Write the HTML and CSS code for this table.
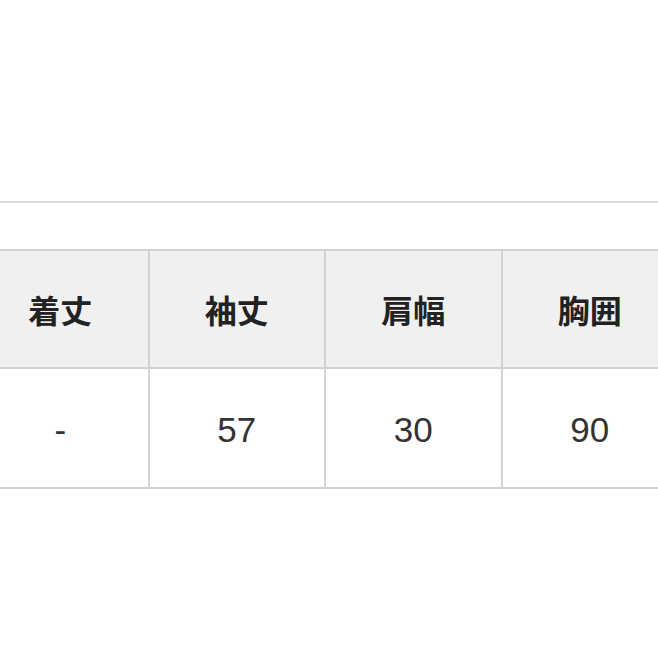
FILE: index.html
```html
<!DOCTYPE html>
<html lang="ja">
<head>
<meta charset="utf-8">
<link rel="stylesheet" href="styles.css">
</head>
<body>
<div class="page">
  <div class="rule"></div>
  <table class="size-table">
    <tr class="head">
      <th>着丈</th>
      <th>袖丈</th>
      <th>肩幅</th>
      <th>胸囲</th>
    </tr>
    <tr class="data">
      <td>-</td>
      <td>57</td>
      <td>30</td>
      <td>90</td>
    </tr>
  </table>
</div>
</body>
</html>
```
FILE: styles.css
```css
html, body {
  margin: 0;
  padding: 0;
  background: #ffffff;
}
.page {
  width: 658px;
  height: 658px;
  overflow: hidden;
  padding-top: 201px;
  box-sizing: border-box;
}
.rule {
  height: 2px;
  background: #dcdcdc;
}
.size-table {
  margin-top: 46px;
  margin-left: -29px;
  width: 708px;
  border-collapse: collapse;
  table-layout: fixed;
}
.size-table th,
.size-table td {
  border: 2px solid #d2d2d2;
  text-align: center;
  vertical-align: middle;
  padding: 0;
}
.head th {
  height: 116px;
  background: #f0f0f0;
  font-family: "Noto Sans CJK JP", "Noto Sans", sans-serif;
  font-weight: bold;
  font-size: 32px;
  color: #222222;
}
.data td {
  height: 114px;
  padding-top: 4px;
  background: #ffffff;
  font-family: "Liberation Sans", Arial, sans-serif;
  font-size: 35px;
  color: #333333;
}
```
